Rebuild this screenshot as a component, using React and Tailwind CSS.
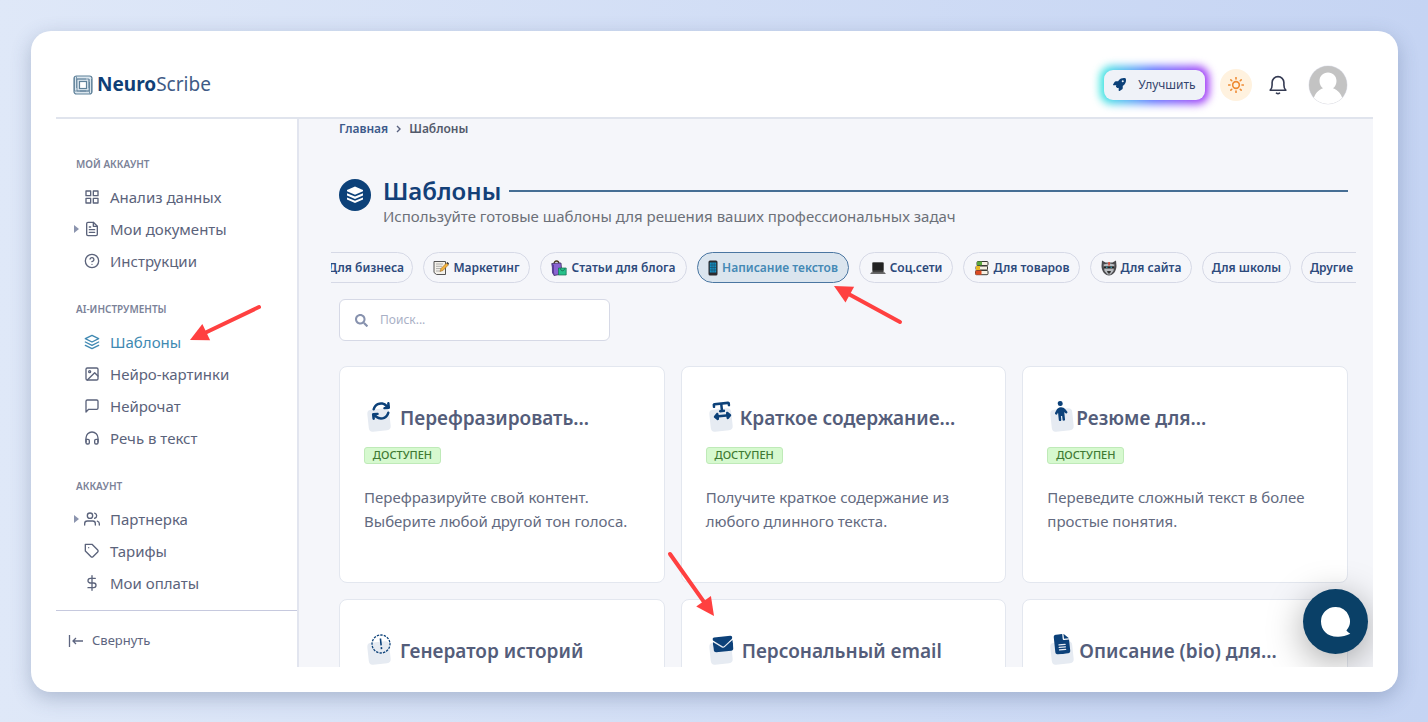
import React from "react";
import {
  FiDollarSign,
  FiFileText,
  FiGrid,
  FiHeadphones,
  FiHelpCircle,
  FiImage,
  FiLayers,
  FiMessageSquare,
  FiSun,
  FiTag,
  FiUsers,
} from "react-icons/fi";
import { FaSearch } from "react-icons/fa";
import {
  FaArrowsRotate,
  FaChild,
  FaEnvelope,
  FaFileLines,
  FaRocket,
  FaTextWidth,
} from "react-icons/fa6";

const MENU = [
  {
    title: "МОЙ АККАУНТ",
    items: [
      { label: "Анализ данных", icon: FiGrid },
      { label: "Мои документы", icon: FiFileText, expandable: true },
      { label: "Инструкции", icon: FiHelpCircle },
    ],
  },
  {
    title: "AI-ИНСТРУМЕНТЫ",
    items: [
      { label: "Шаблоны", icon: FiLayers, active: true },
      { label: "Нейро-картинки", icon: FiImage },
      { label: "Нейрочат", icon: FiMessageSquare },
      { label: "Речь в текст", icon: FiHeadphones },
    ],
  },
  {
    title: "АККАУНТ",
    items: [
      { label: "Партнерка", icon: FiUsers, expandable: true },
      { label: "Тарифы", icon: FiTag },
      { label: "Мои оплаты", icon: FiDollarSign },
    ],
  },
];

const CATEGORIES = [
  { label: "Для бизнеса", size: "w-[106px] -ml-6 pr-2 justify-end" },
  { label: "Маркетинг", size: "w-[107px] justify-center", icon: MemoIcon },
  { label: "Статьи для блога", size: "w-[147px] justify-center", icon: BagsIcon },
  { label: "Написание текстов", size: "w-[152px] justify-center", icon: PhoneIcon, active: true },
  { label: "Соц.сети", size: "w-[94px] justify-center", icon: LaptopIcon },
  { label: "Для товаров", size: "w-[117px] justify-center", icon: BooksIcon },
  { label: "Для сайта", size: "w-[102px] justify-center", icon: RobotIcon },
  { label: "Для школы", size: "w-[89px] justify-center" },
  { label: "Другие", size: "w-[80px] pl-2" },
];

const TEMPLATES = [
  {
    title: "Перефразировать...",
    text: "Перефразируйте свой контент. Выберите любой другой тон голоса.",
    icon: FaArrowsRotate,
    iconWidth: "w-5",
  },
  {
    title: "Краткое содержание...",
    text: "Получите краткое содержание из любого длинного текста.",
    icon: FaTextWidth,
    iconWidth: "w-[18px]",
  },
  {
    title: "Резюме для...",
    text: "Переведите сложный текст в более простые понятия.",
    icon: FaChild,
    iconWidth: "w-[13px]",
  },
  { title: "Генератор историй", icon: DashedAlertIcon, iconWidth: "w-5" },
  { title: "Персональный email", icon: FaEnvelope, iconWidth: "w-5" },
  { title: "Описание (bio) для...", icon: FaFileLines, iconWidth: "w-4" },
];

function MemoIcon() {
  return (
    <svg viewBox="0 0 16 16" className="size-4 shrink-0">
      <path d="M1 1.500h11.500v13H3.500L1 12.500z" fill="#f4f1ea" stroke="#555" strokeWidth="1" />
      <path d="M3 4h7M3 6.300h6M3 8.600h5M3 11h4" stroke="#9a9a9a" strokeWidth=".8" />
      <path d="M7 11.500l1-3L13.500 3l2 1.800L10 10.500z" fill="#f3b13b" stroke="#8a5a1a" strokeWidth=".5" />
      <path d="M13.500 3l1-1 1.500 1.500-.700 1.300z" fill="#333" />
    </svg>
  );
}

function BagsIcon() {
  return (
    <svg viewBox="0 0 16 16" className="size-4 shrink-0">
      <path d="M3 4c0-4 5-4 5 0" fill="none" stroke="#4b3b20" strokeWidth="1.300" />
      <path d="M.800 3.500L10 3l1 11-8 1.500z" fill="#8a63d2" stroke="#3f3060" strokeWidth=".8" />
      <path d="M.800 3.500L3 5v10.500L1 13z" fill="#5a3f95" />
      <path d="M7.500 8h7.700v7H7.500z" fill="#26c08a" stroke="#176b4f" strokeWidth=".7" />
      <path d="M9.500 8.500c0 3 4 3 4 0" fill="none" stroke="#176b4f" strokeWidth=".9" />
    </svg>
  );
}

function PhoneIcon() {
  return (
    <svg viewBox="0 0 10 16" className="h-4 w-[10px] shrink-0">
      <rect x=".5" y=".5" width="9" height="15" rx="1.500" fill="#2b2b2e" />
      <rect x="1.800" y="2.500" width="6.400" height="10" fill="#1391c4" />
      <path d="M4 2.500v10M6.200 2.500v10M1.800 5h6.400M1.800 7.500h6.400M1.800 10h6.400" stroke="#1c4660" strokeWidth=".6" />
    </svg>
  );
}

function LaptopIcon() {
  return (
    <svg viewBox="0 0 16 16" className="size-4 shrink-0">
      <rect x="2.500" y="2.500" width="11" height="8.500" rx=".8" fill="#222" stroke="#555" strokeWidth=".8" />
      <path d="M2.500 11h11l2 2.500H.5z" fill="#777" />
      <path d="M3 11.800h10" stroke="#222" strokeWidth=".9" />
      <path d="M.5 13.500h15" stroke="#555" strokeWidth=".8" />
    </svg>
  );
}

function BooksIcon() {
  return (
    <svg viewBox="0 0 16 16" className="size-4 shrink-0">
      <rect x="3" y="1.500" width="11" height="4" rx="1" fill="#f5efe2" stroke="#3b3b36" strokeWidth="1" />
      <path d="M3 1.500h5v4H3z" fill="#5aa83e" />
      <rect x="2" y="6" width="11.500" height="4" rx="1" fill="#f5efe2" stroke="#3b3b36" strokeWidth="1" />
      <path d="M2 6h4v4H2z" fill="#e7b928" />
      <rect x="1.500" y="10.500" width="12.500" height="4.200" rx="1" fill="#f5efe2" stroke="#3b3b36" strokeWidth="1" />
      <path d="M1.500 10.500h6v4.200h-6z" fill="#dc4a22" />
    </svg>
  );
}

function RobotIcon() {
  return (
    <svg viewBox="0 0 16 16" className="size-4 shrink-0">
      <path d="M1 .500l3.500 2h7l3.500-2L15.500 6c0 5-3.500 9.500-7.500 9.500S.500 11 .500 6z" fill="#4a4a4d" />
      <path d="M2.500 4.500l4.500-1h2l4.500 1-1 6.500-3 3.500h-3l-3-3.500z" fill="#b9bcc0" />
      <path d="M3 6.300h10v2.200H3z" fill="#222" />
      <path d="M5 6.800h1.500v1H5zM9.500 6.800H11v1H9.500z" fill="#35b7d6" />
      <path d="M7.300 2h1.500v3.500H7.300z" fill="#e0432e" />
      <path d="M6 11h4l-1 2.500H7z" fill="#333" />
    </svg>
  );
}

function DashedAlertIcon({ className }) {
  return (
    <svg viewBox="0 0 20 20" className={className} fill="none" stroke="currentColor">
      <circle cx="10" cy="10" r="9" strokeWidth="1.300" strokeDasharray="2.400 1.130" />
      <path d="M10 4.500v6.800M10 13.200v2" strokeWidth="1.600" />
    </svg>
  );
}

function LogoIcon() {
  return (
    <svg viewBox="0 0 20 20" className="size-5" fill="none" stroke="#5f8199">
      <rect x="1" y="1" width="18" height="18" rx="2.500" fill="#dbe6ee" strokeWidth="1.200" />
      <path d="M4 16V4h9M4 4h12v9M16 4v12H7M16 16H4M1.500 2.500V16H13M3.500 1.500V13M18.500 17.500V4M16.500 18.500V7" strokeWidth=".8" />
      <rect x="6.500" y="6.500" width="7" height="7" fill="#fff" strokeWidth="1.200" />
    </svg>
  );
}

function BellIcon() {
  return (
    <svg
      viewBox="0 0 18 20"
      className="h-5 w-[18px]"
      fill="none"
      stroke="currentColor"
      strokeWidth="1.600"
      strokeLinecap="round"
      strokeLinejoin="round"
    >
      <path d="M1.200 15.200c1.600-1.400 1.900-3 1.900-5.200V7.500a5.900 5.900 0 0 1 11.800 0V10c0 2.200.300 3.800 1.900 5.200z" />
      <path d="M7.500 18.200c.900.700 2.100.700 3 0" />
    </svg>
  );
}

function Header() {
  return (
    <header className="flex h-[63px] shrink-0 items-center justify-between border-b-2 border-[#e0e4ed] pr-[25px] pb-1 pl-[17px]">
      <a href="#home" className="flex items-center gap-1 text-[19px] text-[#3f5b86]">
        <LogoIcon />
        <span>
          <b className="font-bold text-[#0f3f77]">Neuro</b>Scribe
        </span>
      </a>
      <div className="flex items-center">
        <div className="relative">
          <div className="absolute -inset-1 rounded-xl bg-linear-to-r from-[#35ecdd] via-[#5b6cff] to-[#a02cf5] blur-[4px]" />
          <button className="relative flex h-[30px] w-[101px] items-center justify-center gap-3 rounded-[9px] bg-[#eff2f8] text-[12px] text-[#35456d]">
            <FaRocket className="size-[13px] text-[#0c4179]" />
            Улучшить
          </button>
        </div>
        <button
          aria-label="Тема"
          className="ml-[15px] flex size-8 items-center justify-center rounded-full bg-[#fff2df] text-[#ee8a33]"
        >
          <FiSun className="size-4" strokeWidth={2.4} />
        </button>
        <button aria-label="Уведомления" className="ml-[17px] text-[#343a52]">
          <BellIcon />
        </button>
        <button aria-label="Профиль" className="ml-[21px]">
          <svg viewBox="0 0 40 40" className="size-10">
            <clipPath id="avatar">
              <circle cx="20" cy="20" r="19" />
            </clipPath>
            <circle cx="20" cy="20" r="19.500" fill="#e4e6f0" />
            <g clipPath="url(#avatar)">
              <path d="M0 0h40v40H0z" fill="#c3c3c3" />
              <path d="M20 7.500c5 0 8.500 3.600 8.500 8.500 0 3.200-1.400 5.700-3.500 7.300 5 2 8.500 5.500 9.500 11L28 40H12l-6.500-5.500c1-5.500 4.500-9.200 9.500-11.200-2.100-1.600-3.500-4.100-3.500-7.300 0-4.900 3.500-8.500 8.500-8.500z" fill="#fff" />
            </g>
          </svg>
        </button>
      </div>
    </header>
  );
}

function MenuItem({ item }) {
  const Icon = item.icon;
  return (
    <a
      href="#menu"
      className={`flex h-8 items-center pl-[18px] text-[15px] ${
        item.active ? "text-[#4089b2]" : "text-[#5b637b]"
      }`}
    >
      <span className="flex w-[10px]">
        {item.expandable && (
          <svg viewBox="0 0 5 8" className="h-2 w-[5px]">
            <path d="M0 0l5 4-5 4z" fill="#8b94ae" />
          </svg>
        )}
      </span>
      <Icon className="mr-[10px] size-4" />
      {item.label}
    </a>
  );
}

function Sidebar() {
  return (
    <aside className="flex w-[243px] shrink-0 flex-col justify-between border-r-2 border-[#e2e5ef]">
      <nav className="flex flex-col gap-4 pt-[29px]">
        {MENU.map((group) => (
          <div key={group.title}>
            <h3 className="mb-px flex h-8 items-center pl-5 text-[10px] font-semibold text-[#7b8298]">
              {group.title}
            </h3>
            {group.items.map((item) => (
              <MenuItem key={item.label} item={item} />
            ))}
          </div>
        ))}
      </nav>
      <button className="flex h-[57px] items-center gap-2 border-t border-[#c6c9de] pt-1 pl-3 text-[13px] text-[#5d6580]">
        <svg viewBox="0 0 16 12" className="h-3 w-4" fill="none" stroke="currentColor" strokeWidth="1.300">
          <path d="M1.500 0v12M15 6H5M8 3L5 6l3 3" />
        </svg>
        Свернуть
      </button>
    </aside>
  );
}

function Categories() {
  return (
    <div className="-mr-2 -ml-2 mt-[26px] flex gap-[10px] overflow-hidden">
      {CATEGORIES.map(({ label, size, icon: Icon, active }) => (
        <button
          key={label}
          className={`flex h-[31px] shrink-0 items-center gap-1 rounded-full border text-[12px] font-semibold whitespace-nowrap ${size} ${
            active
              ? "border-[#4a76a1] bg-[#dbe5ee] text-[#4489b5]"
              : "border-[#d6d9e6] text-[#2d4a7c]"
          }`}
        >
          {Icon && <Icon />}
          {label}
        </button>
      ))}
    </div>
  );
}

function TemplateCard({ template }) {
  const Icon = template.icon;
  return (
    <article className="h-[217px] rounded-lg border border-[#e3e7ef] bg-white px-6 pt-8">
      <div className="flex h-[34px] items-center">
        <div className="relative h-[30px] pl-[7px]">
          <div className="absolute bottom-0 left-1 size-[22px] -rotate-6 rounded bg-[#e6ebf2]" />
          <div className={`relative flex justify-center ${template.iconWidth}`}>
            <Icon className="size-5 shrink-0 -rotate-6 text-[#0c4179]" />
          </div>
        </div>
        <h2 className="ml-[9px] truncate pt-1 text-[19px] font-semibold text-[#545d7a]">
          {template.title}
        </h2>
      </div>
      {template.text && (
        <>
          <span className="mt-[14px] flex h-[17px] w-[77px] items-center justify-center rounded-[3px] border border-[#bfeab8] bg-[#d6f9cf] text-[11px] font-medium text-[#3f7a33]">
            ДОСТУПЕН
          </span>
          <p className="mt-[21px] text-[15px] leading-6 text-[#636a80]">{template.text}</p>
        </>
      )}
    </article>
  );
}

function Content() {
  return (
    <main className="min-w-0 flex-1 overflow-hidden bg-[#f5f6fa] pr-[25px] pl-10">
      <div className="flex h-5 items-center gap-2 text-[12px] font-semibold">
        <a href="#home" className="text-[#3d5a8a]">
          Главная
        </a>
        <svg viewBox="0 0 5 8" className="h-2 w-[5px]" fill="none" stroke="#59627f" strokeWidth="1.400">
          <path d="M1 1l3 3-3 3" />
        </svg>
        <span className="text-[#535a6b]">Шаблоны</span>
      </div>

      <div className="mt-[37px] flex items-start gap-3">
        <div className="mt-[3px] flex size-8 shrink-0 items-center justify-center rounded-full bg-[#0c4179] text-white">
          <svg viewBox="0 0 18 18" className="size-[18px]" fill="currentColor">
            <path d="M9 .500l8 3.500v1.300L9 8.800 1 5.300V4z" />
            <path d="M1 7.200l8 3.300 8-3.300v2.300l-8 3.400-8-3.400z" />
            <path d="M1 11.400l8 3.300 8-3.300v2L9 17l-8-3.600z" />
          </svg>
        </div>
        <div className="min-w-0 flex-1">
          <div className="flex items-center gap-2">
            <h1 className="text-[24px] leading-[30px] font-semibold text-[#134078]">Шаблоны</h1>
            <div className="h-[2px] flex-1 bg-[#466e94]" />
          </div>
          <p className="text-[15px] leading-5 text-[#6c7078]">
            Используйте готовые шаблоны для решения ваших профессиональных задач
          </p>
        </div>
      </div>

      <Categories />

      <label className="mt-4 flex h-[42px] w-[271px] items-center gap-3 rounded-md border border-[#d6d9e6] bg-white px-[15px]">
        <FaSearch className="size-[13px] text-[#8792ae]" />
        <input
          type="text"
          placeholder="Поиск..."
          className="min-w-0 flex-1 text-[12px] outline-none placeholder:text-[#a9b0c6]"
        />
      </label>

      <div className="mt-[25px] grid grid-cols-3 gap-4">
        {TEMPLATES.map((template) => (
          <TemplateCard key={template.title} template={template} />
        ))}
      </div>
    </main>
  );
}

// Draws a pointer from its tail to its tip.
function Arrow({ from, to }) {
  const dx = to[0] - from[0];
  const dy = to[1] - from[1];
  const length = Math.hypot(dx, dy);
  const angle = (Math.atan2(dy, dx) * 180) / Math.PI;
  return (
    <g transform={`translate(${to[0]} ${to[1]}) rotate(${angle})`} fill="#ff4040">
      <path d={`M${-length} 0H-14`} stroke="#ff4040" strokeWidth="4" strokeLinecap="round" />
      <path d="M0 0l-18-9v18z" />
    </g>
  );
}

export default function App() {
  return (
    <div className="relative h-screen overflow-hidden bg-linear-to-r from-[#dfe8f8] to-[#c5d4f3] pt-[31px] pr-[30px] pb-[30px] pl-[31px] font-['Noto_Sans',sans-serif]">
      <div className="h-full rounded-[20px] bg-white p-[25px] shadow-[0_6px_20px_rgba(60,80,120,0.3)]">
        <div className="relative flex h-full flex-col overflow-hidden">
          <Header />
          <div className="flex min-h-0 flex-1">
            <Sidebar />
            <Content />
          </div>
          <button
            aria-label="Чат"
            className="absolute right-[5px] bottom-[13px] flex size-[65px] items-center justify-center rounded-full bg-[#0a4067] shadow-[0_8px_36px_rgba(0,0,0,0.35)]"
          >
            <svg viewBox="0 0 30 30" className="size-[30px]">
              <path d="M14.300 0a14.300 14.300 0 0 1 11.100 23.600q1.500 2 3.900 3.200C25 29 20 30 16.500 29.800 6 29.800 0 23 0 14.500A14.300 14.300 0 0 1 14.300 0z" fill="#fff" />
            </svg>
          </button>
        </div>
      </div>
      <svg className="pointer-events-none absolute top-0 left-0 h-[722px] w-[1428px]">
        <Arrow from={[259, 307]} to={[190, 340]} />
        <Arrow from={[900, 322]} to={[834, 286]} />
        <Arrow from={[670, 554]} to={[714, 616]} />
      </svg>
    </div>
  );
}
